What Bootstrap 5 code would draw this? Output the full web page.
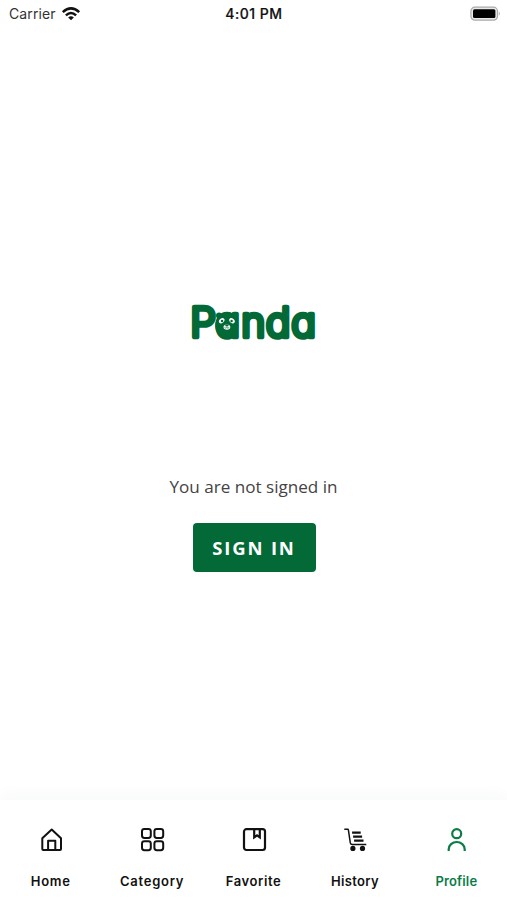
<!DOCTYPE html>
<html lang="en">
<head>
<meta charset="utf-8">
<meta name="viewport" content="width=device-width, initial-scale=1">
<title>Panda – Profile</title>
<link href="https://cdn.jsdelivr.net/npm/bootstrap@5.3.0/dist/css/bootstrap.min.css" rel="stylesheet">
<style>
:root { --brand: #026937; }
body { font-family: Inter, "Liberation Sans", sans-serif; background: #fff; color: #111; overflow: hidden; }
svg { display: block; }
.screen { height: 900px; }
.status { height: 28px; padding: 0 6px 0 9px; font-size: 14px; line-height: 28px; }
.status > * { flex: 1 1 0; }
.carrier { color: #333; letter-spacing: .12px; }
.clock { font-weight: 500; font-size: 14px; letter-spacing: .5px; padding-right: 2px; -webkit-text-stroke: .2px #111; }
.brand-logo { margin-top: 272px; overflow: visible; }
.brand-logo text { font: 300 41px/1 Inter, sans-serif; font-feature-settings: "cv11"; fill: var(--brand); stroke: var(--brand); stroke-linejoin: round; }
.notice { font: 17.1px/24px "Open Sans", sans-serif; color: #444; margin-top: 131px; }
.btn-brand { --bs-btn-bg: var(--brand); --bs-btn-color: #fff; --bs-btn-hover-bg: #015a2f; --bs-btn-hover-color: #fff; --bs-btn-border-width: 0; width: 123px; height: 49px; margin: 24px 0 0 1px; border-radius: 4px; font: 700 18.5px/49px "Open Sans", sans-serif; letter-spacing: 1.8px; }
.tabs { height: 100px; background: #fff; box-shadow: 0 -4px 16px rgba(40, 70, 90, .035); padding-top: 26px; }
.tabs a { color: #111; font-weight: 600; font-size: 13px; line-height: 18px; }
.tabs a.active { color: #0b7c45; }
.tabs svg { margin-bottom: 19px; }
</style>
</head>
<body>
<div class="screen d-flex flex-column">
  <header class="status d-flex align-items-center">
    <div class="carrier d-flex align-items-center">Carrier
      <svg class="ms-1" width="22" height="16" viewBox="0 0 22 16" fill="none" stroke="#111" stroke-width="2.5"><path d="M2.8 6.2Q11 -1.4 19.2 6.2M5.9 9.4Q11 4.6 16.1 9.4"/><path d="M11 14.2L8.2 11.5Q11 9.2 13.8 11.5Z" fill="#111" stroke="none"/></svg>
    </div>
    <div class="clock text-center">4:01 PM</div>
    <div class="d-flex justify-content-end">
      <svg width="31" height="16" viewBox="0 0 31 16"><rect x=".9" y="1.2" width="26.6" height="13" rx="4" fill="#e9e9e9" stroke="#aaa" stroke-width="1.2"/><rect x="3" y="3.3" width="22.4" height="8.8" rx="1.5"/><path d="M28.8 5.5Q30.8 7.6 28.8 9.8Z" fill="#aaa"/></svg>
    </div>
  </header>

  <main class="flex-grow-1 d-flex flex-column align-items-center">
    <svg class="brand-logo" width="130" height="44" viewBox="0 0 130 44" role="img" aria-label="Panda">
      <text x="1.2 26.2 52.2 76.8 102.3" y="36.7" stroke-width="4.6">Panda</text>
      <g fill="#026937"><circle cx="30" cy="15.5" r="3"/><circle cx="45.5" cy="15.5" r="3"/><ellipse cx="37.8" cy="25.5" rx="11.5" ry="12"/></g>
      <g fill="#fff"><ellipse cx="32.7" cy="20.8" rx="3.1" ry="2.2" transform="rotate(-40 32.7 20.8)"/><ellipse cx="43" cy="20.8" rx="3.1" ry="2.2" transform="rotate(40 43 20.8)"/><ellipse cx="37.9" cy="27.1" rx="3.4" ry="2.7"/></g>
      <g fill="#026937"><circle cx="33.1" cy="21" r="1.2"/><circle cx="42.6" cy="21" r="1.2"/><ellipse cx="37.9" cy="25.5" rx="1.7" ry="1"/></g>
      <path d="M35.6 27.5q1.3 1.3 2.3 0q1 1.3 2.3 0" fill="none" stroke="#026937" stroke-width=".7"/>
    </svg>
    <div class="notice">You are not signed in</div>
    <button type="button" class="btn btn-brand p-0">SIGN IN</button>
  </main>

  <nav class="tabs d-flex" aria-label="Main">
    <a href="#" class="col d-flex flex-column align-items-center text-decoration-none">
      <svg width="26" height="27" viewBox="0 0 26 27" fill="none" stroke="currentColor" stroke-width="2" stroke-linejoin="round"><path d="M4.3 23V12.2L13.7 3.5L23 12.2V23Q23 24 22 24H5.3Q4.3 24 4.3 23Z"/><path d="M10.1 24V14.8H17.3V24"/></svg>
      <span style="letter-spacing:.75px">Home</span>
    </a>
    <a href="#" class="col d-flex flex-column align-items-center text-decoration-none">
      <svg width="26" height="27" viewBox="0 0 26 27" fill="none" stroke="currentColor" stroke-width="2"><rect x="3" y="2.9" width="8.8" height="9" rx="2.4"/><rect x="15.4" y="2.9" width="8.8" height="9" rx="2.4"/><rect x="3" y="15.2" width="8.8" height="9" rx="2.4"/><rect x="15.4" y="15.2" width="8.8" height="9" rx="2.4"/></svg>
      <span style="letter-spacing:.75px">Category</span>
    </a>
    <a href="#" class="col d-flex flex-column align-items-center text-decoration-none">
      <svg width="26" height="27" viewBox="0 0 26 27" fill="none" stroke="currentColor" stroke-width="2.2"><rect x="3" y="3.2" width="21" height="20.8" rx="2.4"/><path d="M13.2 3.4V11.4L16 9.4L18.8 11.4V3.4"/></svg>
      <span style="letter-spacing:.6px">Favorite</span>
    </a>
    <a href="#" class="col d-flex flex-column align-items-center text-decoration-none">
      <svg width="26" height="27" viewBox="0 0 26 27" fill="none" stroke="currentColor" stroke-width="1.5"><path d="M2.3 3.2H5.6Q6.3 3.2 6.4 4L8.3 16.9Q8.6 18.6 10.3 18.6H24.3"/><path d="M10.1 6.6H18.7M11.1 10.6H20.1M12.1 14.6H21.5" stroke-width="2.2"/><g fill="currentColor" stroke="none"><circle cx="10.9" cy="22.4" r="2.6"/><circle cx="20.5" cy="22.4" r="2.6"/></g></svg>
      <span style="letter-spacing:.35px">History</span>
    </a>
    <a href="#" class="active col d-flex flex-column align-items-center text-decoration-none" aria-current="page">
      <svg width="26" height="27" viewBox="0 0 26 27" fill="none" stroke="currentColor" stroke-width="2.2"><circle cx="13.7" cy="7.7" r="4.5"/><path d="M5.7 25V23.2A8 7.2 0 0 1 21.7 23.2V25"/></svg>
      <span style="letter-spacing:.15px">Profile</span>
    </a>
  </nav>
</div>
<script src="https://cdn.jsdelivr.net/npm/bootstrap@5.3.0/dist/js/bootstrap.bundle.min.js"></script>
</body>
</html>
